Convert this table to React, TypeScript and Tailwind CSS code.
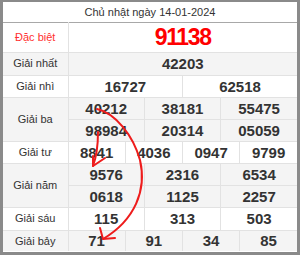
const rows: { label: string; cells: string[][]; gray: boolean; h: string }[] = [
  { label: "Giải nhất", cells: [["42203"]], gray: true, h: "h-[23px]" },
  { label: "Giải nhì", cells: [["16727", "62518"]], gray: false, h: "h-[22px]" },
  { label: "Giải ba", cells: [["40212", "38181", "55475"], ["98984", "20314", "05059"]], gray: true, h: "h-[22px]" },
  { label: "Giải tư", cells: [["8841", "4036", "0947", "9799"]], gray: false, h: "h-[22px]" },
  { label: "Giải năm", cells: [["9576", "2316", "6534"], ["0618", "1125", "2257"]], gray: true, h: "h-[22px]" },
  { label: "Giải sáu", cells: [["115", "313", "503"]], gray: false, h: "h-[23px]" },
  { label: "Giải bảy", cells: [["71", "91", "34", "85"]], gray: true, h: "h-[21px]" },
];

const span = (n: number) => 12 / n;

const Arrows = () => (
  <svg
    className="pointer-events-none absolute left-0 top-0"
    width="300"
    height="255"
    viewBox="0 0 300 255"
    fill="none"
    stroke="#ee1c1c"
    strokeWidth="2"
    strokeLinecap="round"
    strokeLinejoin="round"
  >
    <path d="M97 109 C115 113, 133 135, 140 160 C147 190, 135 220, 103 239" />
    <path d="M100 228 L103 239 L115 238" />
    <path d="M98 132 C98 145, 97 155, 93 166" />
    <path d="M93 156 L93 166 L105 158" />
  </svg>
);

export default function App() {
  return (
    <div className="relative h-[255px] w-[300px] bg-white font-['Liberation_Sans',Arial,sans-serif] text-[#333]">
      <div className="h-full w-full border-[3px] border-t-2 border-[#8a8a8a]">
        <table className="w-full table-fixed border-collapse border-hidden">
          <colgroup>
            <col className="w-[65px]" />
            {Array.from({ length: 12 }).map((_, i) => (
              <col key={i} />
            ))}
          </colgroup>
          <tbody>
            <tr className="h-[20px] border-b border-[#a8a8a8]">
              <td colSpan={13} className="text-center text-[11px]">
                Chủ nhật ngày 14-01-2024
              </td>
            </tr>
            <tr className="h-[30px] border-b border-[#e2e2e2]">
              <td className="border-r border-[#e2e2e2] text-center text-[11px] text-[#ff3030]">
                Đặc biệt
              </td>
              <td colSpan={12} className="text-center text-[23px] font-bold leading-none tracking-[-1.3px] text-[#ff0000]">
                91138
              </td>
            </tr>
            {rows.map((r) =>
              r.cells.map((line, li) => (
                <tr key={r.label + li} className={`${r.h} ${r.gray ? "bg-[#f4f4f4]" : "bg-white"}`}>
                  {li === 0 && (
                    <td
                      rowSpan={r.cells.length}
                      className="border border-[#e2e2e2] text-center text-[11px]"
                    >
                      {r.label}
                    </td>
                  )}
                  {line.map((n, ci) => (
                    <td
                      key={ci}
                      colSpan={span(line.length)}
                      className="border border-[#e2e2e2] text-center text-[15px] font-bold leading-none"
                    >
                      {n}
                    </td>
                  ))}
                </tr>
              ))
            )}
          </tbody>
        </table>
      </div>
      <Arrows />
    </div>
  );
}
